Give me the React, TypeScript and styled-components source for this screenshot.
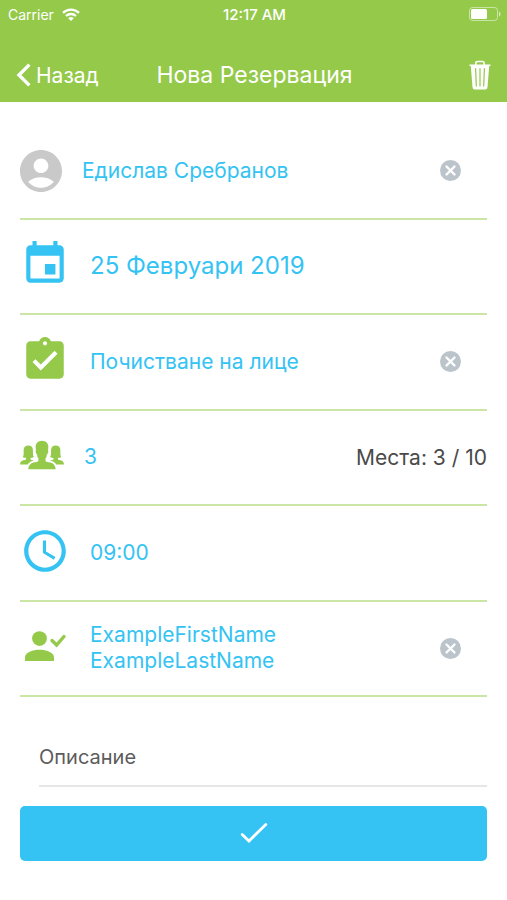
import React from "react";
import styled, { createGlobalStyle } from "styled-components";
import { MdAccountCircle, MdEvent, MdAssignmentTurnedIn, MdAccessTime } from "react-icons/md";
import { IoIosPeople } from "react-icons/io";

const GREEN = "#94c94a";
const BLUE = "#34c3f3";

const GlobalStyle = createGlobalStyle`
  * { box-sizing: border-box; }
  body {
    margin: 0;
    background: #fff;
    font-family: Inter, Roboto, sans-serif;
  }
  button, input { font: inherit; color: inherit; }
  button { padding: 0; border: 0; background: none; cursor: pointer; text-align: left; }
  svg { display: block; flex: none; }
`;

const Header = styled.header`
  background: ${GREEN};
  color: #fff;
`;

const StatusBar = styled.div`
  display: grid;
  grid-template-columns: 1fr auto 1fr;
  align-items: center;
  height: 28px;
  padding: 0 6px 0 8px;
  font-size: 14px;
`;

const Carrier = styled.div`
  display: flex;
  align-items: center;
  gap: 8px;
`;

const Clock = styled.time`
  font-size: 15px;
  font-weight: 500;
`;

const Battery = styled.div`
  display: flex;
  justify-content: flex-end;
`;

const NavBar = styled.nav`
  display: grid;
  grid-template-columns: 1fr auto 1fr;
  align-items: center;
  height: 74px;
  padding: 20px 16px 0;
`;

const BackButton = styled.button`
  display: flex;
  align-items: center;
  gap: 5px;
  font-size: 21px;
`;

const Title = styled.h1`
  margin: 0;
  padding-left: 2px;
  font-size: 23px;
  font-weight: 400;
  line-height: 28px;
`;

const TrashButton = styled.button`
  display: flex;
  justify-self: end;
`;

const Form = styled.form`
  padding: 22px 20px 40px;
`;

const Rows = styled.ul`
  display: grid;
  grid-auto-rows: 1fr;
  min-height: 573px;
  margin: 0;
  padding: 0;
  list-style: none;
`;

const Row = styled.li`
  display: flex;
  align-items: center;
  border-bottom: 2px solid #cbe5a4;
`;

const IconSlot = styled.span<{ $color: string; $width?: number; $inset?: number; $centered?: boolean }>`
  display: flex;
  flex: none;
  width: ${(p) => p.$width ?? 70}px;
  padding-left: ${(p) => p.$inset ?? 0}px;
  padding-bottom: ${(p) => (p.$centered ? 0 : 4)}px;
  color: ${(p) => p.$color};
`;

const Value = styled.button<{ $large?: boolean }>`
  flex: 1;
  color: ${BLUE};
  font-size: ${(p) => (p.$large ? 24 : 21)}px;
  line-height: 26px;
`;

const Seats = styled.span`
  color: #4a4a4a;
  font-size: 21px;
`;

const ClearButton = styled.button`
  margin-right: 26px;
`;

const Description = styled.input`
  display: block;
  width: calc(100% - 19px);
  height: 58px;
  margin: 32px 0 19px 19px;
  padding: 0;
  border: 0;
  border-bottom: 2px solid #e6e6e6;
  border-radius: 0;
  background: none;
  color: #555;
  font-size: 20px;
  outline: none;
  &::placeholder { color: #5c5c5c; opacity: 1; }
`;

const Submit = styled.button`
  display: flex;
  align-items: center;
  justify-content: center;
  width: 100%;
  height: 55px;
  padding-bottom: 2px;
  border-radius: 5px;
  background: ${BLUE};
  color: #fff;
`;

const WifiIcon = () => (
  <svg width="18" height="13" viewBox="0 0 18 13" fill="none" stroke="currentColor" strokeWidth="2.3" aria-hidden="true">
    <path d="M1 4.8a11.6 11.6 0 0 1 16 0M4 8a7.3 7.3 0 0 1 10 0" />
    <path d="M9 13 6.2 10.2a4.2 4.2 0 0 1 5.6 0z" fill="currentColor" stroke="none" />
  </svg>
);

const BatteryIcon = () => (
  <svg width="32" height="14" viewBox="0 0 32 14" aria-hidden="true">
    <rect x="0.5" y="0.5" width="28" height="13" rx="3" fill="none" stroke="#fff" strokeOpacity="0.5" />
    <rect x="2" y="2" width="16" height="10" rx="1.5" fill="#fff" />
    <path d="M30 4.5v5q1.6-.8 1.6-2.5T30 4.5z" fill="#fff" fillOpacity="0.6" />
  </svg>
);

const BackIcon = () => (
  <svg width="15" height="24" viewBox="0 0 15 24" fill="none" stroke="currentColor" strokeWidth="3.4" aria-hidden="true">
    <path d="M13.4 1.6 3 12l10.4 10.4" />
  </svg>
);

const TrashIcon = () => (
  <svg width="22" height="30" viewBox="0 0 22 30" aria-hidden="true">
    <path d="M6.800 5V3.200Q6.800 1.400 8.600 1.400h4.800q1.800 0 1.800 1.800V5" fill="none" stroke="#fff" strokeWidth="1.500" />
    <path d="M.5 4.400h21V6h-1.300l-1.700 21.300q-.2 2.200-2.300 2.200H5.800q-2.100 0-2.300-2.200L1.800 6H.5z" fill="#fff" />
    <path d="m6.600 8.500.7 17.500M11 8.500V26m4.400-17.500L14.700 26" fill="none" stroke={GREEN} strokeWidth="1.200" strokeLinecap="round" />
  </svg>
);

const CheckIcon = () => (
  <svg width="28" height="22" viewBox="0 0 28 22" fill="none" stroke="currentColor" strokeWidth="2.8" strokeLinecap="round" aria-hidden="true">
    <path d="M2.2 12.4 9 19 25.8 2.4" />
  </svg>
);

const PersonCheckIcon = () => (
  <svg width="42" height="31" viewBox="0 0 42 31" fill="currentColor" aria-hidden="true">
    <circle cx="14.5" cy="7.6" r="7.400" />
    <path d="M0 30v-3.600C0 21.300 8 18.800 14.500 18.800S29 21.300 29 26.400V30z" />
    <path d="m27 9.600 4.600 4.400 7.400-8.500" fill="none" stroke="currentColor" strokeWidth="3.400" strokeLinecap="round" />
  </svg>
);

const Clear = ({ label }: { label: string }) => (
  <ClearButton type="button" aria-label={label}>
    <svg width="21" height="21" viewBox="0 0 21 21" aria-hidden="true">
      <circle cx="10.5" cy="10.5" r="10.5" fill="#bcc4cb" />
      <path d="m6.500 6.500 8 8m0-8-8 8" stroke="#fff" strokeWidth="2.400" strokeLinecap="round" />
    </svg>
  </ClearButton>
);

export default function App() {
  return (
    <>
      <GlobalStyle />
      <Header>
        <StatusBar>
          <Carrier>Carrier <WifiIcon /></Carrier>
          <Clock>12:17 AM</Clock>
          <Battery><BatteryIcon /></Battery>
        </StatusBar>
        <NavBar>
          <BackButton type="button"><BackIcon />Назад</BackButton>
          <Title>Нова Резервация</Title>
          <TrashButton type="button" aria-label="Изтрий"><TrashIcon /></TrashButton>
        </NavBar>
      </Header>
      <Form onSubmit={(e) => e.preventDefault()}>
        <Rows>
          <Row>
            <IconSlot $color="#c9c9c9" $width={62} $centered><MdAccountCircle size={42} viewBox="2 2 20 20" /></IconSlot>
            <Value type="button">Едислав Сребранов</Value>
            <Clear label="Изчисти клиент" />
          </Row>
          <Row>
            <IconSlot $color={BLUE}><MdEvent size={50} /></IconSlot>
            <Value type="button" $large>25 Февруари 2019</Value>
          </Row>
          <Row>
            <IconSlot $color={GREEN}><MdAssignmentTurnedIn size={50} /></IconSlot>
            <Value type="button">Почистване на лице</Value>
            <Clear label="Изчисти услуга" />
          </Row>
          <Row>
            <IconSlot $color={GREEN} $width={64}><IoIosPeople size={44} viewBox="32 32 448 448" /></IconSlot>
            <Value type="button">3</Value>
            <Seats>Места: 3 / 10</Seats>
          </Row>
          <Row>
            <IconSlot $color={BLUE}><MdAccessTime size={50} /></IconSlot>
            <Value type="button">09:00</Value>
          </Row>
          <Row>
            <IconSlot $color={GREEN} $inset={5}><PersonCheckIcon /></IconSlot>
            <Value type="button">ExampleFirstName<br />ExampleLastName</Value>
            <Clear label="Изчисти служител" />
          </Row>
        </Rows>
        <Description type="text" placeholder="Описание" aria-label="Описание" />
        <Submit type="submit" aria-label="Запази"><CheckIcon /></Submit>
      </Form>
    </>
  );
}
